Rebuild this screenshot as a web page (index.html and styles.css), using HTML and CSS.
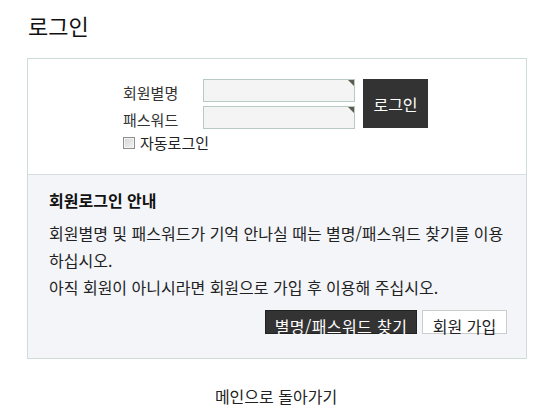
FILE: index.html
```html
<!DOCTYPE html>
<html lang="ko">
<head>
<meta charset="utf-8">
<title>로그인</title>
<link rel="stylesheet" href="styles.css">
</head>
<body>
<div class="page">
  <h1 class="title">로그인</h1>
  <div class="box">
    <div class="login-area">
      <div class="login-form">
        <div class="fields">
          <div class="field-row">
            <label class="label">회원별명</label>
            <span class="input-wrap"><input class="input" type="text"><span class="corner"></span></span>
          </div>
          <div class="field-row">
            <label class="label">패스워드</label>
            <span class="input-wrap"><input class="input" type="password"><span class="corner"></span></span>
          </div>
        </div>
        <button class="btn-login" type="button">로그인</button>
      </div>
      <div class="auto-row">
        <span class="check"></span>
        <span class="auto-label">자동로그인</span>
      </div>
    </div>
    <div class="guide">
      <h2 class="guide-title">회원로그인 안내</h2>
      <p class="guide-text">회원별명 및 패스워드가 기억 안나실 때는 별명/패스워드 찾기를 이용 하십시오.</p>
      <p class="guide-text">아직 회원이 아니시라면 회원으로 가입 후 이용해 주십시오.</p>
      <div class="guide-actions">
        <span class="btn btn-dark">별명/패스워드 찾기</span>
        <span class="btn btn-light">회원 가입</span>
      </div>
    </div>
  </div>
  <div class="back">
    <a class="back-link">메인으로 돌아가기</a>
  </div>
</div>
</body>
</html>
```
FILE: styles.css
```css
* { box-sizing: border-box; }
html, body { margin: 0; padding: 0; background: #fff; }
body {
  font-family: "Noto Sans CJK KR", "Noto Sans", sans-serif;
  color: #222;
}
.page {
  width: 500px;
  margin-left: 27px;
}
.title {
  margin: 0 0 17px 1px;
  padding-top: 10px;
  font-size: 22px;
  line-height: 31px;
  font-weight: normal;
  color: #111;
}
.box {
  border: 1px solid #cfdcd8;
  width: 500px;
}
.login-area {
  padding: 20px 0 0 95px;
  height: 115px;
}
.login-form {
  display: flex;
  align-items: flex-start;
}
.fields {
  display: flex;
  flex-direction: column;
  gap: 4px;
}
.field-row {
  display: flex;
  align-items: center;
  height: 23px;
}
.label {
  width: 80px;
  font-size: 15px;
  line-height: 20px;
  color: #333;
  padding-top: 5px;
}
.input-wrap {
  position: relative;
  display: block;
  width: 152px;
  height: 23px;
}
.input {
  display: block;
  width: 152px;
  height: 23px;
  margin: 0;
  padding: 0 4px;
  border: 1px solid #b9cac4;
  background: #f4f4f4;
  outline: none;
}
.corner {
  position: absolute;
  top: 1px;
  right: 1px;
  width: 0;
  height: 0;
  border-top: 6px solid #5b5b4f;
  border-left: 6px solid transparent;
}
.btn-login {
  margin: 0 0 0 8px;
  width: 65px;
  height: 49px;
  border: none;
  background: #333;
  color: #fff;
  font-family: inherit;
  font-size: 16px;
  padding: 0;
  cursor: pointer;
}
.auto-row {
  display: flex;
  align-items: center;
  margin-top: 5px;
  height: 18px;
}
.check {
  display: inline-block;
  width: 12px;
  height: 12px;
  border: 1px solid #8e8e8e;
  background: linear-gradient(135deg, #d6d6d6, #f2f2f2);
  box-shadow: inset 0 0 0 1px #f4f4f4;
  margin-right: 5px;
}
.auto-label {
  font-size: 15px;
  line-height: 18px;
  color: #222;
}
.guide {
  border-top: 1px solid #d6dfdd;
  background: #f3f5f9;
  padding: 12px 19px 24px 21px;
}
.guide-title {
  margin: 0 0 7px 0;
  font-size: 16px;
  line-height: 26px;
  font-weight: bold;
  color: #111;
}
.guide-text {
  margin: 0;
  font-size: 16px;
  line-height: 27px;
  color: #222;
  word-break: keep-all;
}
.guide-actions {
  display: flex;
  justify-content: flex-end;
  gap: 5px;
  margin-top: 9px;
}
.btn {
  display: block;
  height: 24px;
  padding-top: 4px;
  font-size: 16px;
  line-height: 22px;
  text-align: center;
  white-space: nowrap;
}
.btn-dark {
  width: 152px;
  background: #333;
  border: 1px solid #222;
  color: #fff;
  letter-spacing: 0.4px;
}
.btn-light {
  width: 85px;
  background: #fff;
  border: 1px solid #ccc;
  color: #222;
}
.back {
  width: 500px;
  text-align: center;
  padding-top: 25px;
}
.back-link {
  font-size: 16px;
  line-height: 24px;
  color: #222;
  margin-left: -2px;
}
```
